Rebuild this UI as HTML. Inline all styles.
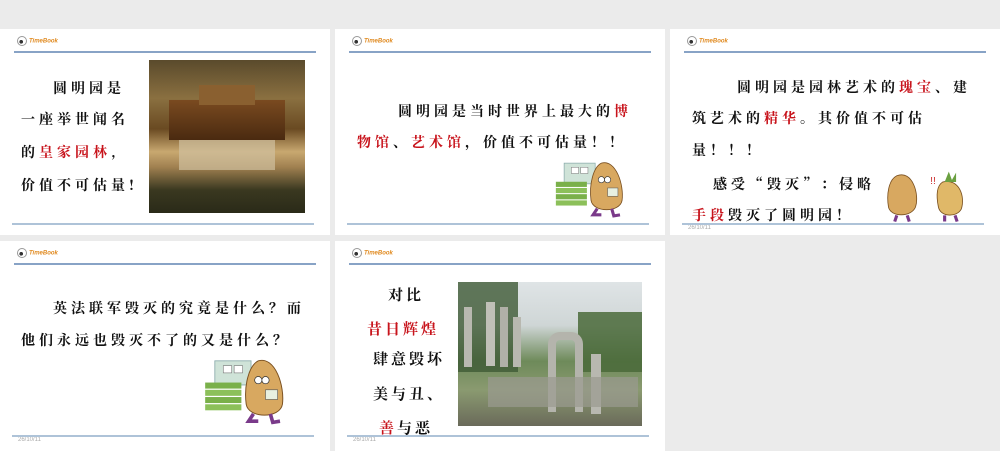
<!DOCTYPE html>
<html><head><meta charset="utf-8"><style>
*{margin:0;padding:0;box-sizing:border-box}
body{width:1000px;height:442px;background:#ebebeb;position:relative;overflow:hidden;font-family:"Liberation Sans","Noto Sans CJK SC",sans-serif}
.s{position:absolute;background:#fff;width:330px;height:206px;overflow:hidden}
.hl{position:absolute;left:14px;right:14px;top:22px;height:2px;background:#88a3c6}
.bl{position:absolute;left:12px;right:16px;top:194px;height:2px;background:#aec3d8}
.logo{position:absolute;left:17px;top:7px;font-size:6px;color:#e08a20;font-weight:bold;font-style:italic}
.logo i{display:inline-block;width:10px;height:10px;border-radius:50%;border:1px solid #999;vertical-align:middle;margin-right:2px;background:radial-gradient(circle at 40% 60%,#333 25%,#fff 30%)}
.t{position:absolute;font-family:"Noto Serif CJK SC","Noto Sans CJK SC",serif;font-weight:bold;color:#111;white-space:nowrap;font-size:14px;letter-spacing:4px}
.r{color:#c8141c}
.d{position:absolute;left:18px;top:196px;font-size:6px;color:#aaa}
</style></head><body>
<svg width="0" height="0" style="position:absolute"><defs>
<g id="pot">
<rect x="2" y="4" width="30" height="20" fill="#cfe3d8" stroke="#8aa" stroke-width="0.7"/>
<rect x="9" y="8" width="7" height="6" fill="#fff" stroke="#777" stroke-width="0.5"/>
<rect x="18" y="8" width="7" height="6" fill="#fff" stroke="#777" stroke-width="0.5"/>
<rect x="-6" y="22" width="30" height="5" fill="#7ab04a"/><rect x="-6" y="28" width="30" height="5" fill="#8cc05a"/><rect x="-6" y="34" width="30" height="5" fill="#7ab04a"/><rect x="-6" y="40" width="30" height="5" fill="#8cc05a"/>
<path d="M38 4 C52 0 60 25 58 40 C56 52 30 52 28 40 C26 25 30 8 38 4Z" fill="#d8a860" stroke="#7a5020" stroke-width="0.8"/>
<circle cx="38" cy="20" r="3" fill="#fff" stroke="#333" stroke-width="0.6"/><circle cx="44" cy="20" r="3" fill="#fff" stroke="#333" stroke-width="0.6"/>
<rect x="44" y="28" width="10" height="8" fill="#e8f0e0" stroke="#555" stroke-width="0.5"/>
<path d="M34 48 L30 54 L38 54 M48 48 L50 55 L56 54" stroke="#7a3a8a" stroke-width="3" fill="none"/>
</g></defs></svg>

<!-- slide 1 -->
<div class="s" style="left:0;top:29px">
<div class="logo"><i></i>TimeBook</div><div class="hl"></div>
<div class="t" style="left:53px;top:49px">圆明园是</div>
<div class="t" style="left:21px;top:80px">一座举世闻名</div>
<div class="t" style="left:21px;top:113px">的<span class="r">皇家园林</span>,</div>
<div class="t" style="left:21px;top:146px">价值不可估量!</div>
<div style="position:absolute;left:149px;top:31px;width:156px;height:153px;background:linear-gradient(180deg,#5a4a2c 0%,#8a7040 25%,#6a4a22 45%,#c8a870 60%,#a08050 70%,#3a3820 85%,#2a2a18 100%)">
<div style="position:absolute;left:20px;top:40px;width:116px;height:40px;background:linear-gradient(#7a4a20,#4a2a10)"></div>
<div style="position:absolute;left:50px;top:25px;width:56px;height:20px;background:#8a6030"></div>
<div style="position:absolute;left:30px;top:80px;width:96px;height:30px;background:#d0c0a0;opacity:.7"></div>
</div>
<div class="bl"></div></div>

<!-- slide 2 -->
<div class="s" style="left:335px;top:29px">
<div class="logo"><i></i>TimeBook</div><div class="hl"></div>
<div class="t" style="left:63px;top:72px">圆明园是当时世界上最大的<span class="r">博</span></div>
<div class="t" style="left:22px;top:103px"><span class="r">物馆</span>、<span class="r">艺术馆</span>，价值不可估量！！</div>
<svg style="position:absolute;left:210px;top:130px" width="90" height="60" viewBox="-8 0 70 58"><use href="#pot"/></svg>
<div class="bl"></div></div>

<!-- slide 3 -->
<div class="s" style="left:670px;top:29px">
<div class="logo"><i></i>TimeBook</div><div class="hl"></div>
<div class="t" style="left:67px;top:48px">圆明园是园林艺术的<span class="r">瑰宝</span>、建</div>
<div class="t" style="left:22px;top:79px">筑艺术的<span class="r">精华</span>。其价值不可估</div>
<div class="t" style="left:22px;top:111px">量！！！</div>
<div class="t" style="left:43px;top:145px">感受“毁灭”：侵略</div>
<div class="t" style="left:22px;top:176px"><span class="r">手段</span>毁灭了圆明园！</div>
<svg style="position:absolute;left:206px;top:135px" width="104" height="60" viewBox="0 0 100 55">
<path d="M20 10 C35 4 42 28 38 40 C34 50 14 50 12 40 C10 28 12 14 20 10Z" fill="#d8a860" stroke="#7a5020" stroke-width="0.8"/>
<path d="M64 16 C80 12 86 30 82 42 C78 50 62 50 60 40 C58 30 58 20 64 16Z" fill="#e0b868" stroke="#7a5020" stroke-width="0.8"/>
<path d="M66 16 L70 6 L73 14 L77 7 L77 16" fill="#6aa040"/>
<text x="52" y="18" fill="#c33" font-size="10" font-family="Liberation Sans">!!</text>
<path d="M20 48 L18 54 M30 48 L32 54 M66 48 L66 54 M76 48 L78 54" stroke="#7a3a8a" stroke-width="3"/>
</svg>
<div class="d">26/10/11</div>
<div class="bl"></div></div>

<!-- slide 4 -->
<div class="s" style="left:0;top:241px;height:210px">
<div class="logo"><i></i>TimeBook</div><div class="hl"></div>
<div class="t" style="left:53px;top:57px">英法联军毁灭的究竟是什么？而</div>
<div class="t" style="left:21px;top:89px">他们永远也毁灭不了的又是什么？</div>
<svg style="position:absolute;left:195px;top:115px" width="100" height="70" viewBox="-8 0 70 58"><use href="#pot"/></svg>
<div class="d">26/10/11</div>
<div class="bl"></div></div>

<!-- slide 5 -->
<div class="s" style="left:335px;top:241px;height:210px">
<div class="logo"><i></i>TimeBook</div><div class="hl"></div>
<div class="t" style="left:53px;top:43px;font-size:15px;letter-spacing:3px">对比</div>
<div class="t r" style="left:32px;top:77px;font-size:15px;letter-spacing:3px">昔日辉煌</div>
<div class="t" style="left:38px;top:107px;font-size:15px;letter-spacing:3px">肆意毁坏</div>
<div class="t" style="left:38px;top:142px;font-size:15px;letter-spacing:3px">美与丑、</div>
<div class="t" style="left:44px;top:176px;font-size:15px;letter-spacing:3px"><span class="r">善</span>与恶</div>
<div style="position:absolute;left:123px;top:41px;width:184px;height:144px;background:linear-gradient(180deg,#dfe4e6 0%,#cfd6d6 30%,#6e8a5a 55%,#8a9a70 75%,#6a6a5a 100%)">
<div style="position:absolute;left:0;top:0;width:60px;height:90px;background:#3e5a36;opacity:.8"></div>
<div style="position:absolute;left:120px;top:30px;width:64px;height:60px;background:#4a6a3a;opacity:.85"></div>
<div style="position:absolute;left:6px;top:25px;width:8px;height:60px;background:#b8b8b0"></div>
<div style="position:absolute;left:28px;top:20px;width:9px;height:64px;background:#c0c0b8"></div>
<div style="position:absolute;left:42px;top:25px;width:8px;height:60px;background:#b0b0a8"></div>
<div style="position:absolute;left:55px;top:35px;width:8px;height:50px;background:#b8b8b0"></div>
<div style="position:absolute;left:90px;top:50px;width:35px;height:80px;border:8px solid #b4b4ac;border-bottom:none;border-radius:12px 12px 0 0"></div>
<div style="position:absolute;left:133px;top:72px;width:10px;height:60px;background:#b8b8b0"></div>
<div style="position:absolute;left:30px;top:95px;width:150px;height:30px;background:#9a9a90;opacity:.7"></div>
</div>
<div class="d">26/10/11</div>
<div class="bl"></div></div>
</body></html>
